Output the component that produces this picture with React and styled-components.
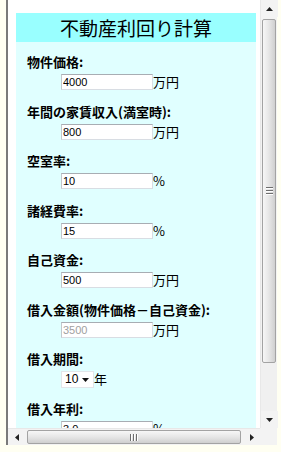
import styled, { createGlobalStyle } from 'styled-components';

const FIELDS = [
  { label: '物件価格:', value: '4000', unit: '万円' },
  { label: '年間の家賃収入(満室時):', value: '800', unit: '万円' },
  { label: '空室率:', value: '10', unit: '%' },
  { label: '諸経費率:', value: '15', unit: '%' },
  { label: '自己資金:', value: '500', unit: '万円' },
  { label: '借入金額(物件価格－自己資金):', value: '3500', unit: '万円', disabled: true },
  { label: '借入期間:', select: '10', unit: '年' },
  { label: '借入年利:', value: '3.0', unit: '%' },
];

const Global = createGlobalStyle`
  html, body {
    margin: 0;
    padding: 0;
    background: #fffff2;
    overflow: hidden;
  }
  body {
    font-family: 'Noto Sans CJK JP', 'Liberation Sans', sans-serif;
  }
`;

const Arrow = ({ dir }) => {
  const pts = {
    up: '0,4 7,4 3.5,0',
    down: '0,0 7,0 3.5,4',
    left: '4,0 4,7 0,3.5',
    right: '0,0 0,7 4,3.5',
  }[dir];
  const vertical = dir === 'up' || dir === 'down';
  return (
    <svg width={vertical ? 7 : 4} height={vertical ? 4 : 7}>
      <polygon points={pts} fill="#222" />
    </svg>
  );
};

export default function App() {
  return (
    <>
      <Global />
      <Window>
        <Viewport>
          <Panel>
            <Title>不動産利回り計算</Title>
            <Body>
              {FIELDS.map((f) => (
                <Field key={f.label}>
                  <Label>{f.label}</Label>
                  <InputRow>
                    {f.select ? (
                      <SelectBox>
                        <span>{f.select}</span>
                        <svg width="7" height="5">
                          <polygon points="0,0 7,0 3.5,4" fill="#111" />
                        </svg>
                      </SelectBox>
                    ) : (
                      <TextInput defaultValue={f.value} disabled={f.disabled} />
                    )}
                    <Unit>{f.unit}</Unit>
                  </InputRow>
                </Field>
              ))}
            </Body>
          </Panel>
        </Viewport>
        <VScroll>
          <ScrollButton>
            <Arrow dir="up" />
          </ScrollButton>
          <VThumb>
            <Grip $vertical>
              <i />
              <i />
              <i />
            </Grip>
          </VThumb>
          <Track />
          <ScrollButton>
            <Arrow dir="down" />
          </ScrollButton>
        </VScroll>
        <HScroll>
          <ScrollButton>
            <Arrow dir="left" />
          </ScrollButton>
          <HThumb>
            <Grip>
              <i />
              <i />
              <i />
            </Grip>
          </HThumb>
          <ScrollButton>
            <Arrow dir="right" />
          </ScrollButton>
        </HScroll>
        <Corner />
      </Window>
    </>
  );
}

const Window = styled.div`
  margin-left: 6px;
  width: 269px;
  height: 445px;
  border-left: 2px solid #7a7a7a;
  display: grid;
  grid-template-columns: 252px 17px;
  grid-template-rows: 428px 17px;
  background: #fff;
`;

const Viewport = styled.div`
  overflow: hidden;
  background: #fff;
  padding: 13px 0 0 8px;
  box-sizing: border-box;
`;

const Panel = styled.div`
  width: 240px;
`;

const Title = styled.div`
  height: 29px;
  background: #99ffff;
  text-align: center;
  font-size: 19px;
  line-height: 29px;
  color: #000;
`;

const Body = styled.div`
  background: #e0ffff;
  padding: 12px 0 20px 11px;
`;

const Field = styled.div`
  margin-bottom: 13.5px;
`;

const Label = styled.div`
  height: 16px;
  line-height: 16px;
  font-size: 13px;
  font-weight: bold;
  color: #000;
  white-space: nowrap;
`;

const InputRow = styled.div`
  margin-top: 4px;
  padding-left: 34px;
  height: 16px;
  display: flex;
  align-items: center;
`;

const TextInput = styled.input`
  box-sizing: border-box;
  width: 92px;
  height: 16px;
  margin: 0;
  padding: 0 0 0 1px;
  border: 1px solid #d8dde3;
  border-top-color: #a8adb3;
  border-left-color: #c4c8cc;
  background: #fff;
  font-family: 'Liberation Sans', sans-serif;
  font-size: 11px;
  color: #000;
  outline: none;
  &:disabled {
    color: #a0a0a0;
    background: #fff;
  }
`;

const SelectBox = styled.div`
  box-sizing: border-box;
  width: 33px;
  height: 17px;
  border: 1px solid #e2e6ea;
  background: #fff;
  display: flex;
  align-items: center;
  justify-content: space-between;
  padding: 0 4px 0 3px;
  font-family: 'Liberation Sans', sans-serif;
  font-size: 12px;
  svg {
    margin-top: 3px;
  }
`;

const Unit = styled.span`
  font-size: 13px;
  line-height: 16px;
  color: #000;
`;

const VScroll = styled.div`
  display: flex;
  flex-direction: column;
  background: #f3f3f3;
  border-left: 1px solid #e8e8e8;
`;

const ScrollButton = styled.div`
  flex: 0 0 17px;
  width: 17px;
  height: 17px;
  display: flex;
  align-items: center;
  justify-content: center;
  background: #f3f3f3;
`;

const VThumb = styled.div`
  margin: 2px 1px 0;
  height: 344px;
  box-sizing: border-box;
  border: 1px solid #a3a3a3;
  border-radius: 2px;
  background: linear-gradient(90deg, #f7f7f7, #e6e6e6 50%, #cfcfcf);
  display: flex;
  align-items: center;
  justify-content: center;
`;

const Track = styled.div`
  flex: 1;
  background: #f0f0f0;
`;

const HScroll = styled.div`
  display: flex;
  background: #f3f3f3;
  border-top: 1px solid #e8e8e8;
`;

const HThumb = styled.div`
  margin: 1px 2px;
  flex: 1;
  box-sizing: border-box;
  border: 1px solid #a3a3a3;
  border-radius: 2px;
  background: linear-gradient(180deg, #f7f7f7, #e6e6e6 50%, #cfcfcf);
  display: flex;
  align-items: center;
  justify-content: center;
`;

const Grip = styled.div`
  display: flex;
  flex-direction: ${({ $vertical }) => ($vertical ? 'column' : 'row')};
  gap: 1px;
  i {
    display: block;
    width: ${({ $vertical }) => ($vertical ? '7px' : '1px')};
    height: ${({ $vertical }) => ($vertical ? '1px' : '7px')};
    background: #6e6e6e;
    border-${({ $vertical }) => ($vertical ? 'bottom' : 'right')}: 1px solid #fff;
  }
`;

const Corner = styled.div`
  background: #f3f3f3;
`;
